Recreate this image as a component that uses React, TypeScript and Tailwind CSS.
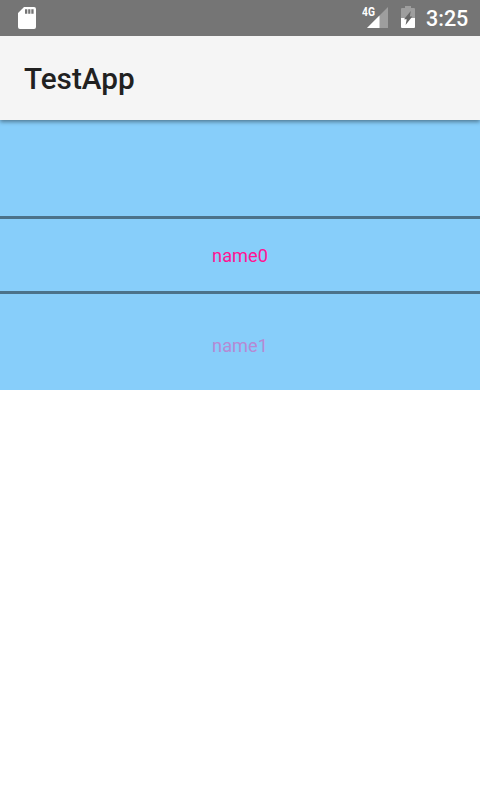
function MemoryCardIcon() {
  return (
    <svg className="ml-[18px]" width="18" height="22" viewBox="0 0 18 22" fill="white">
      <path fillRule="evenodd" d="M6 0H16a2 2 0 0 1 2 2V20a2 2 0 0 1-2 2H2a2 2 0 0 1-2-2V6ZM7 2.3V6.7H9.3V2.3ZM10.2 2.3V6.7H12.4V2.3ZM13.3 2.3V6.7H15.6V2.3Z" />
    </svg>
  );
}

function SignalIcon() {
  return (
    <svg className="-ml-2 mb-px" width="21" height="21" viewBox="0 0 21 21">
      <path d="M21 0V21H0Z" fill="#9e9e9e" />
      <path d="M12.5 8.5V21H0Z" fill="white" />
    </svg>
  );
}

function BatteryIcon() {
  return (
    <svg className="mb-0.5 ml-[13px]" width="14" height="22" viewBox="0 0 14 22">
      <path d="M4 0H10V2H13a1 1 0 0 1 1 1V12H0V3a1 1 0 0 1 1-1H4Z" fill="#9e9e9e" />
      <path d="M0 12H14V21a1 1 0 0 1-1 1H1a1 1 0 0 1-1-1Z" fill="white" />
      <path d="M9.8 5L8.8 10.5H11.3L4.6 19L5.7 13.2H3Z" fill="#666666" />
    </svg>
  );
}

export default function App() {
  return (
    <div className="flex h-[800px] w-[480px] flex-col overflow-hidden bg-white font-[Roboto,sans-serif]">
      <header className="z-20 flex h-9 shrink-0 items-center justify-between bg-[#757575] pr-3 text-white">
        <MemoryCardIcon />
        <div className="flex h-6 items-center">
          <span className="mb-[11px] w-[13px] origin-left scale-x-[.82] text-[12.5px] leading-none font-bold">4G</span>
          <SignalIcon />
          <BatteryIcon />
          <span className="ml-[11px] w-[42px] pt-0.5 text-[21.5px] leading-none font-medium">3:25</span>
        </div>
      </header>
      <div className="z-10 flex h-[84px] shrink-0 items-center bg-[#f5f5f5] pt-0.5 pl-6 shadow-[0_2px_4px_rgba(0,0,0,0.4)]">
        <h1 className="text-[29.7px] font-medium text-[#212121]">TestApp</h1>
      </div>
      <main className="flex h-[270px] shrink-0 flex-col bg-[#87cefa] text-lg">
        <div className="h-24" />
        <div className="flex h-[78px] items-center justify-center border-y-3 border-[#4b728a] pt-0.5 text-[18.2px] text-[#ff1493]">name0</div>
        <div className="flex h-24 items-center justify-center pt-2 text-[18.2px] text-[#b689d4]">name1</div>
      </main>
    </div>
  );
}
